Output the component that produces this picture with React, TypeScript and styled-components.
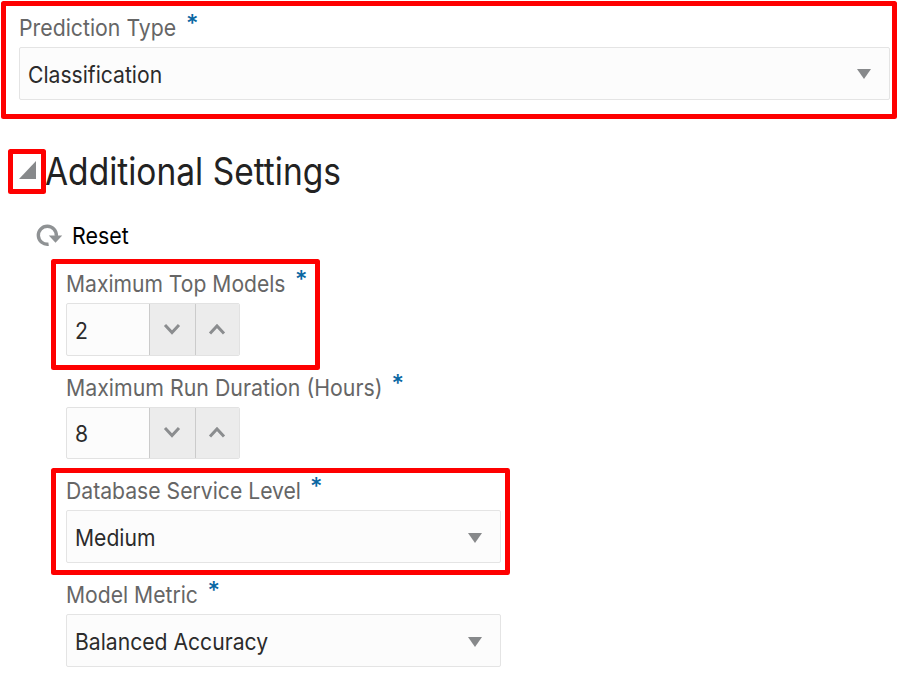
import React from "react";
import styled, { createGlobalStyle } from "styled-components";

const GlobalStyle = createGlobalStyle`
  *, *::before, *::after { box-sizing: border-box; }
  body {
    margin: 0;
    background: #fff;
    font-family: Inter, "Liberation Sans", sans-serif;
    overflow: hidden;
  }
`;

const Page = styled.main`
  display: flex;
  flex-direction: column;
  width: 897px;
  height: 693px;
  padding: 14px 7px 0 19px;
  overflow: hidden;
`;

/* Red callout frame drawn over the element it surrounds. */
const Marked = styled.div<{ $frame?: string }>`
  position: relative;
  &::after {
    content: "";
    display: ${(p) => (p.$frame ? "block" : "none")};
    position: absolute;
    inset: ${(p) => p.$frame ?? "0"};
    border: 5px solid #fe0000;
    border-radius: 2.5px;
    pointer-events: none;
  }
`;

const Field = styled(Marked)`
  display: flex;
  flex-direction: column;
`;

const LabelRow = styled.div`
  display: flex;
  height: 33px;
  line-height: 28px;
  font-size: 23px;
  color: #666;
`;

/* Slightly condensed text; $width is the space it takes on the line. */
const Condensed = styled.span<{ $scale?: number; $width?: number }>`
  display: block;
  flex: none;
  width: ${(p) => (p.$width ? `${p.$width}px` : "max-content")};
  white-space: nowrap;
  transform: scaleX(${(p) => p.$scale ?? 0.922});
  transform-origin: 0 50%;
`;

const Required = styled.span`
  margin: -4px 0 0 9.5px;
  font-size: 24px;
  font-weight: 500;
  line-height: 28px;
  color: #0a67a3;
`;

const Select = styled.div<{ $wide?: boolean }>`
  display: flex;
  align-items: center;
  justify-content: space-between;
  width: ${(p) => (p.$wide ? "871px" : "435px")};
  height: 53px;
  padding: ${(p) => (p.$wide ? "2px 18px 0 8px" : "3px 18.5px 0 7.5px")};
  border: 1px solid #e4e4e4;
  border-radius: 2px;
  background: #fcfcfc;
  font-size: 23px;
  line-height: 28px;
  color: #2b2b2b;
`;

const Caret = styled.svg`
  flex: none;
  width: 14px;
  height: 10px;
  margin-top: -1px;
  fill: #87898b;
`;

const Stepper = styled.div<{ $height: number }>`
  display: grid;
  grid-template-columns: 82px 46px 44px;
  width: 174px;
  height: ${(p) => p.$height}px;
  border: 1px solid #e2e2e2;
  border-radius: 2px;
  background: #fcfcfc;
  overflow: hidden;
`;

const StepValue = styled.div`
  display: flex;
  align-items: center;
  padding: 2px 0 0 7.5px;
  font-size: 23px;
  line-height: 28px;
  color: #2b2b2b;
`;

const StepButton = styled.button`
  display: flex;
  align-items: center;
  justify-content: center;
  padding: 0 2px 2px 0;
  border: 0;
  border-left: 1px solid #cbcbcb;
  background: #ececec;
`;

const Chevron = styled.svg`
  width: 18px;
  height: 14px;
  fill: none;
  stroke: #8b8d8f;
  stroke-width: 3;
`;

const SectionHeader = styled.header`
  display: flex;
  height: 48px;
  margin-top: 48px;
`;

const Disclosure = styled(Marked)`
  width: 17px;
  height: 18px;
  margin-top: 13px;
`;

const Triangle = styled.svg`
  display: block;
  fill: #87898b;
`;

const Title = styled.h2`
  margin: -1px 0 0 9px;
  font-size: 38px;
  font-weight: 400;
  line-height: 48px;
  color: #222;
`;

const ResetRow = styled.div`
  display: flex;
  gap: 9px;
  height: 28px;
  margin: 26px 0 20px 17px;
  font-size: 23px;
  line-height: 28px;
  color: #000;
`;

const ResetIcon = styled.svg`
  flex: none;
  width: 27px;
  height: 24px;
  margin-top: 1px;
`;

const Settings = styled.section`
  display: flex;
  flex-direction: column;
  gap: 18px;
  padding-left: 47px;
`;

type LabelProps = { text: string; width: number; scale?: number };

function Label({ text, width, scale }: LabelProps) {
  return (
    <LabelRow>
      <Condensed $width={width} $scale={scale}>{text}</Condensed>
      <Required>*</Required>
    </LabelRow>
  );
}

type SelectFieldProps = LabelProps & { value: string; frame?: string; wide?: boolean };

function SelectField({ value, frame, wide, ...label }: SelectFieldProps) {
  return (
    <Field $frame={frame}>
      <Label {...label} />
      <Select $wide={wide}>
        <Condensed $scale={0.919}>{value}</Condensed>
        <Caret viewBox="0 0 14 10"><path d="M0 0h14L7 10z" /></Caret>
      </Select>
    </Field>
  );
}

type StepFieldProps = LabelProps & { value: number; frame?: string; height: number };

function StepField({ value, frame, height, ...label }: StepFieldProps) {
  return (
    <Field $frame={frame}>
      <Label {...label} />
      <Stepper $height={height}>
        <StepValue><Condensed>{value}</Condensed></StepValue>
        <StepButton aria-label="Decrease">
          <Chevron viewBox="0 0 18 14"><path d="M2 3l7 7.5L16 3" /></Chevron>
        </StepButton>
        <StepButton aria-label="Increase">
          <Chevron viewBox="0 0 18 14"><path d="M2 11.5L9 4l7 7.5" /></Chevron>
        </StepButton>
      </Stepper>
    </Field>
  );
}

export default function App() {
  return (
    <>
      <GlobalStyle />
      <Page>
        <SelectField wide text="Prediction Type" width={157.5} scale={0.925} value="Classification" frame="-13px -7px -18.5px -18px" />
        <SectionHeader>
          <Disclosure $frame="-12px -9.5px -15px -11px">
            <Triangle width="17" height="18" viewBox="0 0 17 18"><path d="M17 0v18H0z" /></Triangle>
          </Disclosure>
          <Title><Condensed $scale={0.882}>Additional Settings</Condensed></Title>
        </SectionHeader>
        <ResetRow>
          <ResetIcon viewBox="0 0 27 24">
            <path d="M12.6 21.2A9 9 0 1 1 20.3 13" fill="none" stroke="#8f9294" strokeWidth="3.4" />
            <path d="M12.8 12.6h13.4l-6.7 7.2z" fill="#8f9294" />
          </ResetIcon>
          <Condensed $scale={0.93}>Reset</Condensed>
        </ResetRow>
        <Settings>
          <StepField text="Maximum Top Models" width={219.5} scale={0.917} value={2} height={53} frame="-11px 570px -13.5px -15px" />
          <StepField text="Maximum Run Duration (Hours)" width={316} scale={0.927} value={8} height={52} />
          <SelectField text="Database Service Level" width={234.5} scale={0.92} value="Medium" frame="-9.5px 380px -12px -15px" />
          <SelectField text="Model Metric" width={132} scale={0.919} value="Balanced Accuracy" />
        </Settings>
      </Page>
    </>
  );
}
